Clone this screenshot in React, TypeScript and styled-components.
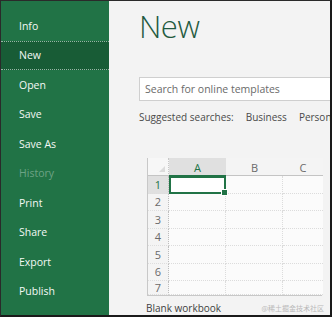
import React from "react";
import styled, { createGlobalStyle } from "styled-components";

const Global = createGlobalStyle`
  html, body { margin: 0; padding: 0; background: #ffffff; }
  * { box-sizing: border-box; }
`;

const Frame = styled.div`
  width: 332px;
  height: 317px;
  border-top: 1px solid #2a2a2a;
  border-left: 1px solid #2a2a2a;
  border-right: 2px solid #1a1a1a;
  border-bottom: 2px solid #1a1a1a;
  display: grid;
  grid-template-columns: 108px 1fr;
  overflow: hidden;
  font-family: "Open Sans", "Noto Sans", sans-serif;
`;

const Sidebar = styled.nav`
  background: #217346;
  padding-top: 10px;
  display: flex;
  flex-direction: column;
`;

const MenuItem = styled.div<{ $active?: boolean; $disabled?: boolean }>`
  height: 29.5px;
  flex: none;
  display: flex;
  align-items: center;
  padding-left: 18px;
  font-size: 10.5px;
  color: ${(p) => (p.$disabled ? "rgba(255,255,255,0.35)" : "#f4f8f5")};
  background: ${(p) => (p.$active ? "#185c36" : "transparent")};
  border-top: 1px dotted ${(p) => (p.$active ? "rgba(255,255,255,0.55)" : "transparent")};
  border-bottom: 1px dotted ${(p) => (p.$active ? "rgba(255,255,255,0.55)" : "transparent")};
`;

const Main = styled.main`
  background: #f3f3f3;
  padding: 4px 0 0 30px;
  display: flex;
  flex-direction: column;
  overflow: hidden;
  white-space: nowrap;
`;

const Heading = styled.h1`
  margin: 0;
  font-weight: 300;
  font-size: 31px;
  line-height: 42px;
  color: #1f5a40;
  letter-spacing: -0.5px;
`;

const SearchBox = styled.div`
  margin-top: 30px;
  height: 24px;
  width: 260px;
  background: #ffffff;
  border: 1px solid #cfcfcf;
  border-right: none;
  display: flex;
  align-items: center;
  padding-left: 5px;
  font-size: 10.5px;
  color: #6a6a6a;
`;

const Suggested = styled.div`
  margin-top: 9px;
  display: flex;
  gap: 12px;
  font-size: 10px;
  color: #4a4a4a;
`;

const Thumb = styled.div`
  margin-top: 34px;
  margin-left: 8px;
  width: 175px;
  display: grid;
  grid-template-columns: 21px 57px 57px 40px;
  grid-template-rows: 18px repeat(6, 17.5px) 14px;
  border: 1px solid #c8c8c8;
  border-top: none;
  background: #f7f7f7;
  font-size: 11px;
  color: #555;
`;

const Corner = styled.div`
  border-bottom: 1px solid #c4c4c4;
  border-right: 1px dotted #c8c8c8;
  position: relative;
  &::after {
    content: "";
    position: absolute;
    right: 3px;
    bottom: 3px;
    border-left: 6px solid transparent;
    border-bottom: 6px solid #dcdcdc;
  }
`;

const ColHead = styled.div<{ $sel?: boolean }>`
  display: flex;
  align-items: center;
  justify-content: center;
  background: ${(p) => (p.$sel ? "#e0e0e0" : "#f4f4f4")};
  border-bottom: 1px solid ${(p) => (p.$sel ? "#217346" : "#c4c4c4")};
  color: ${(p) => (p.$sel ? "#217346" : "#6a6a6a")};
  padding-top: 1px;
`;

const RowHead = styled.div<{ $sel?: boolean }>`
  display: flex;
  align-items: center;
  justify-content: center;
  background: ${(p) => (p.$sel ? "#e0e0e0" : "#f4f4f4")};
  border-right: 1px dotted #bdbdbd;
  color: ${(p) => (p.$sel ? "#217346" : "#6a6a6a")};
  border-bottom: 1px dotted #dedede;
`;

const Cell = styled.div<{ $last?: boolean }>`
  background: #fbfbfb;
  border-bottom: 1px dotted #dcdcdc;
  border-right: ${(p) => (p.$last ? "none" : "1px dotted #dcdcdc")};
`;

const SelCell = styled.div`
  position: relative;
  background: #ffffff;
  border: 2px solid #217346;
  &::after {
    content: "";
    position: absolute;
    right: -4px;
    bottom: -4px;
    width: 5px;
    height: 5px;
    background: #217346;
    border: 1px solid #ffffff;
  }
`;

const Footer = styled.div`
  margin-top: 5px;
  margin-left: 7px;
  display: flex;
  align-items: center;
  justify-content: space-between;
  width: 178px;
`;

const Caption = styled.span`
  font-size: 10px;
  color: #404040;
`;

const Watermark = styled.span`
  font-family: "Noto Sans CJK SC", sans-serif;
  font-size: 7px;
  color: #b9b9b9;
`;

const items = [
  "Info",
  "New",
  "Open",
  "Save",
  "Save As",
  "History",
  "Print",
  "Share",
  "Export",
  "Publish",
];

export default function App() {
  const rows = [1, 2, 3, 4, 5, 6, 7];
  return (
    <>
      <Global />
      <Frame>
        <Sidebar>
          {items.map((it) => (
            <MenuItem key={it} $active={it === "New"} $disabled={it === "History"}>
              {it}
            </MenuItem>
          ))}
        </Sidebar>
        <Main>
          <Heading>New</Heading>
          <SearchBox>Search for online templates</SearchBox>
          <Suggested>
            <span>Suggested searches:</span>
            <span>Business</span>
            <span>Personal</span>
          </Suggested>
          <Thumb>
            <Corner />
            <ColHead $sel>A</ColHead>
            <ColHead>B</ColHead>
            <ColHead>C</ColHead>
            {rows.map((r) => (
              <React.Fragment key={r}>
                <RowHead $sel={r === 1}>{r}</RowHead>
                {r === 1 ? <SelCell /> : <Cell />}
                <Cell />
                <Cell $last />
              </React.Fragment>
            ))}
          </Thumb>
          <Footer>
            <Caption>Blank workbook</Caption>
            <Watermark>@稀土掘金技术社区</Watermark>
          </Footer>
        </Main>
      </Frame>
    </>
  );
}
